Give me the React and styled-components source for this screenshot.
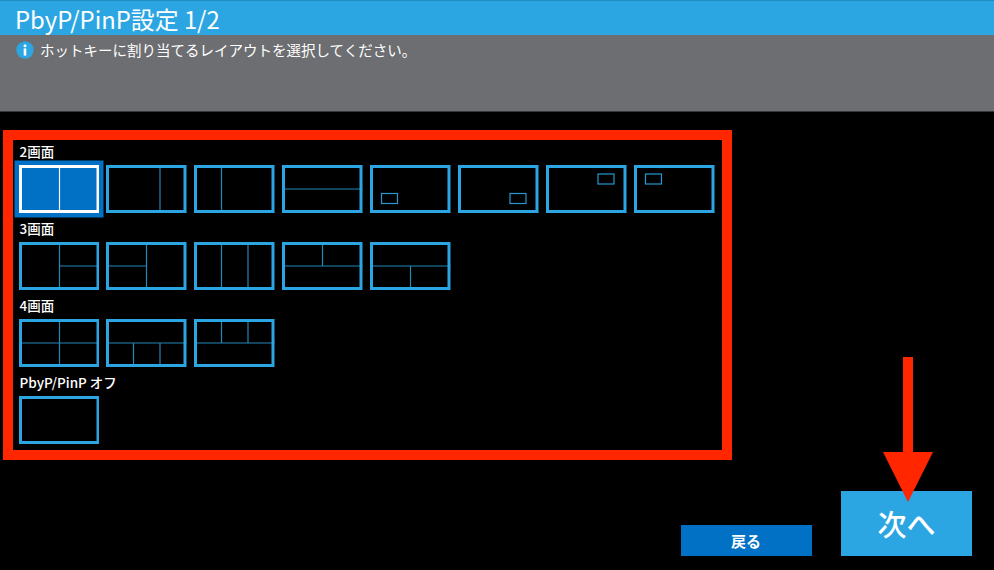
import React from "react";
import styled, { createGlobalStyle } from "styled-components";

const FONT = `"Noto Sans CJK JP", "Noto Sans", sans-serif`;

const GlobalStyle = createGlobalStyle`
  html, body {
    margin: 0;
    background: #000;
    overflow: hidden;
  }
`;

const Page = styled.div`
  width: 994px;
  height: 570px;
  background: #000;
  color: #fff;
  font-family: ${FONT};
  display: flex;
  flex-direction: column;
`;

const TitleBar = styled.h1`
  margin: 0;
  height: 34px;
  border-top: 1px solid #1f8dc2;
  padding-left: 15px;
  background: #2ca6e2;
  font-size: 23.85px;
  font-weight: 400;
  line-height: 36px;
  white-space: nowrap;
`;

const InfoPanel = styled.div`
  height: 70px;
  border-bottom: 1px solid #33363a;
  padding: 6px 0 0 16px;
  background: #6d6e71;
  display: flex;
  align-items: flex-start;
  gap: 6px;
`;

const InfoText = styled.p`
  margin: 0;
  font-size: 14.5px;
  line-height: 17px;
  white-space: nowrap;
`;

const Frame = styled.section`
  box-sizing: border-box;
  width: 729px;
  height: 330px;
  margin: 18px 0 0 3px;
  border: 10px solid #ff2600;
  padding-left: 5.5px;
`;

const Group = styled.div`
  margin-bottom: 4px;
`;

const GroupLabel = styled.h2`
  margin: 0;
  height: 25px;
  padding-left: 1px;
  font-size: 13.5px;
  font-weight: 500;
  line-height: 23px;
  white-space: nowrap;
`;

const ThumbRow = styled.div`
  display: flex;
  gap: 7.45px;
`;

const ThumbBox = styled.svg`
  display: block;
  flex: none;
  width: 80.5px;
  height: 48px;
  background: ${(p) => (p.$selected ? "#0071c5" : "transparent")};
  box-shadow: ${(p) => (p.$selected ? "0 0 0 4.5px #0071c5" : "none")};
`;

const Outline = styled.rect`
  fill: none;
  stroke: ${(p) => (p.$selected ? "#fff" : "#2ca6e2")};
  stroke-width: 3;
`;

const Divider = styled.line`
  stroke: ${(p) => (p.$selected ? "#fff" : "#2387b8")};
  stroke-width: 1.2;
`;

const Inset = styled.rect`
  fill: none;
  stroke: #2598d0;
  stroke-width: 1.2;
`;

const Footer = styled.footer`
  display: flex;
  justify-content: flex-end;
  align-items: flex-end;
  gap: 29.5px;
  height: 65px;
  margin-top: 31px;
  padding-right: 22px;
`;

const BackButton = styled.button`
  width: 131px;
  height: 31px;
  border: 0;
  padding: 0;
  background: #0071c5;
  color: #fff;
  font-family: ${FONT};
  font-size: 15px;
  font-weight: 700;
  line-height: 31px;
`;

const NextButton = styled.button`
  position: relative;
  width: 131px;
  height: 65px;
  border: 0;
  padding: 0;
  background: #2ca6e2;
  color: #fff;
  font-family: ${FONT};
  font-size: 29px;
  font-weight: 500;
  line-height: 65px;
`;

const ArrowMark = styled.svg`
  position: absolute;
  left: 42px;
  top: -134px;
  width: 50px;
  height: 145px;
`;

const W = 80.5;
const H = 48;
const MID = 24;
const C1 = 27.5;
const C2 = 54;

const v = (x, y1 = 0, y2 = H) => [x, y1, x, y2];
const h = (y, x1 = 0, x2 = W) => [x1, y, x2, y];

const groups = [
  {
    label: "2画面",
    thumbs: [
      { lines: [v(40.5)], selected: true },
      { lines: [v(C2)] },
      { lines: [v(C1)] },
      { lines: [h(MID)] },
      { inset: [11.5, 28.5] },
      { inset: [52, 28.5] },
      { inset: [52, 9] },
      { inset: [11.5, 9] },
    ],
  },
  {
    label: "3画面",
    thumbs: [
      { lines: [v(40.5), h(MID, 40.5)] },
      { lines: [v(40.5), h(MID, 0, 40.5)] },
      { lines: [v(C1), v(C2)] },
      { lines: [h(MID), v(40.5, 0, MID)] },
      { lines: [h(MID), v(40.5, MID)] },
    ],
  },
  {
    label: "4画面",
    thumbs: [
      { lines: [v(40.5), h(MID)] },
      { lines: [h(MID), v(C1, MID), v(C2, MID)] },
      { lines: [h(MID), v(C1, 0, MID), v(C2, 0, MID)] },
    ],
  },
  { label: "PbyP/PinP オフ", thumbs: [{}] },
];

function Thumb({ lines = [], inset, selected }) {
  return (
    <ThumbBox viewBox={`0 0 ${W} ${H}`} $selected={selected}>
      {lines.map(([x1, y1, x2, y2], i) => (
        <Divider key={i} x1={x1} y1={y1} x2={x2} y2={y2} $selected={selected} />
      ))}
      {inset && <Inset x={inset[0]} y={inset[1]} width={16} height={10} />}
      <Outline x="1.5" y="1.5" width={W - 3} height={H - 3} $selected={selected} />
    </ThumbBox>
  );
}

export default function App() {
  return (
    <Page>
      <GlobalStyle />
      <TitleBar>PbyP/PinP設定 1/2</TitleBar>
      <InfoPanel>
        <svg width="18" height="18" viewBox="0 0 18 18">
          <circle cx="9" cy="9" r="8.7" fill="#2ca6e2" />
          <circle cx="9" cy="4.8" r="1.5" fill="#fff" />
          <rect x="7.7" y="7.4" width="2.6" height="7.2" fill="#fff" />
        </svg>
        <InfoText>ホットキーに割り当てるレイアウトを選択してください。</InfoText>
      </InfoPanel>
      <Frame>
        {groups.map((group) => (
          <Group key={group.label}>
            <GroupLabel>{group.label}</GroupLabel>
            <ThumbRow>
              {group.thumbs.map((thumb, i) => (
                <Thumb key={i} {...thumb} />
              ))}
            </ThumbRow>
          </Group>
        ))}
      </Frame>
      <Footer>
        <BackButton>戻る</BackButton>
        <NextButton>
          次へ
          <ArrowMark viewBox="0 0 50 145">
            <polygon
              points="20,0 30,0 30,95 50,95 25,145 0,95 20,95"
              fill="#ff2600"
            />
          </ArrowMark>
        </NextButton>
      </Footer>
    </Page>
  );
}
